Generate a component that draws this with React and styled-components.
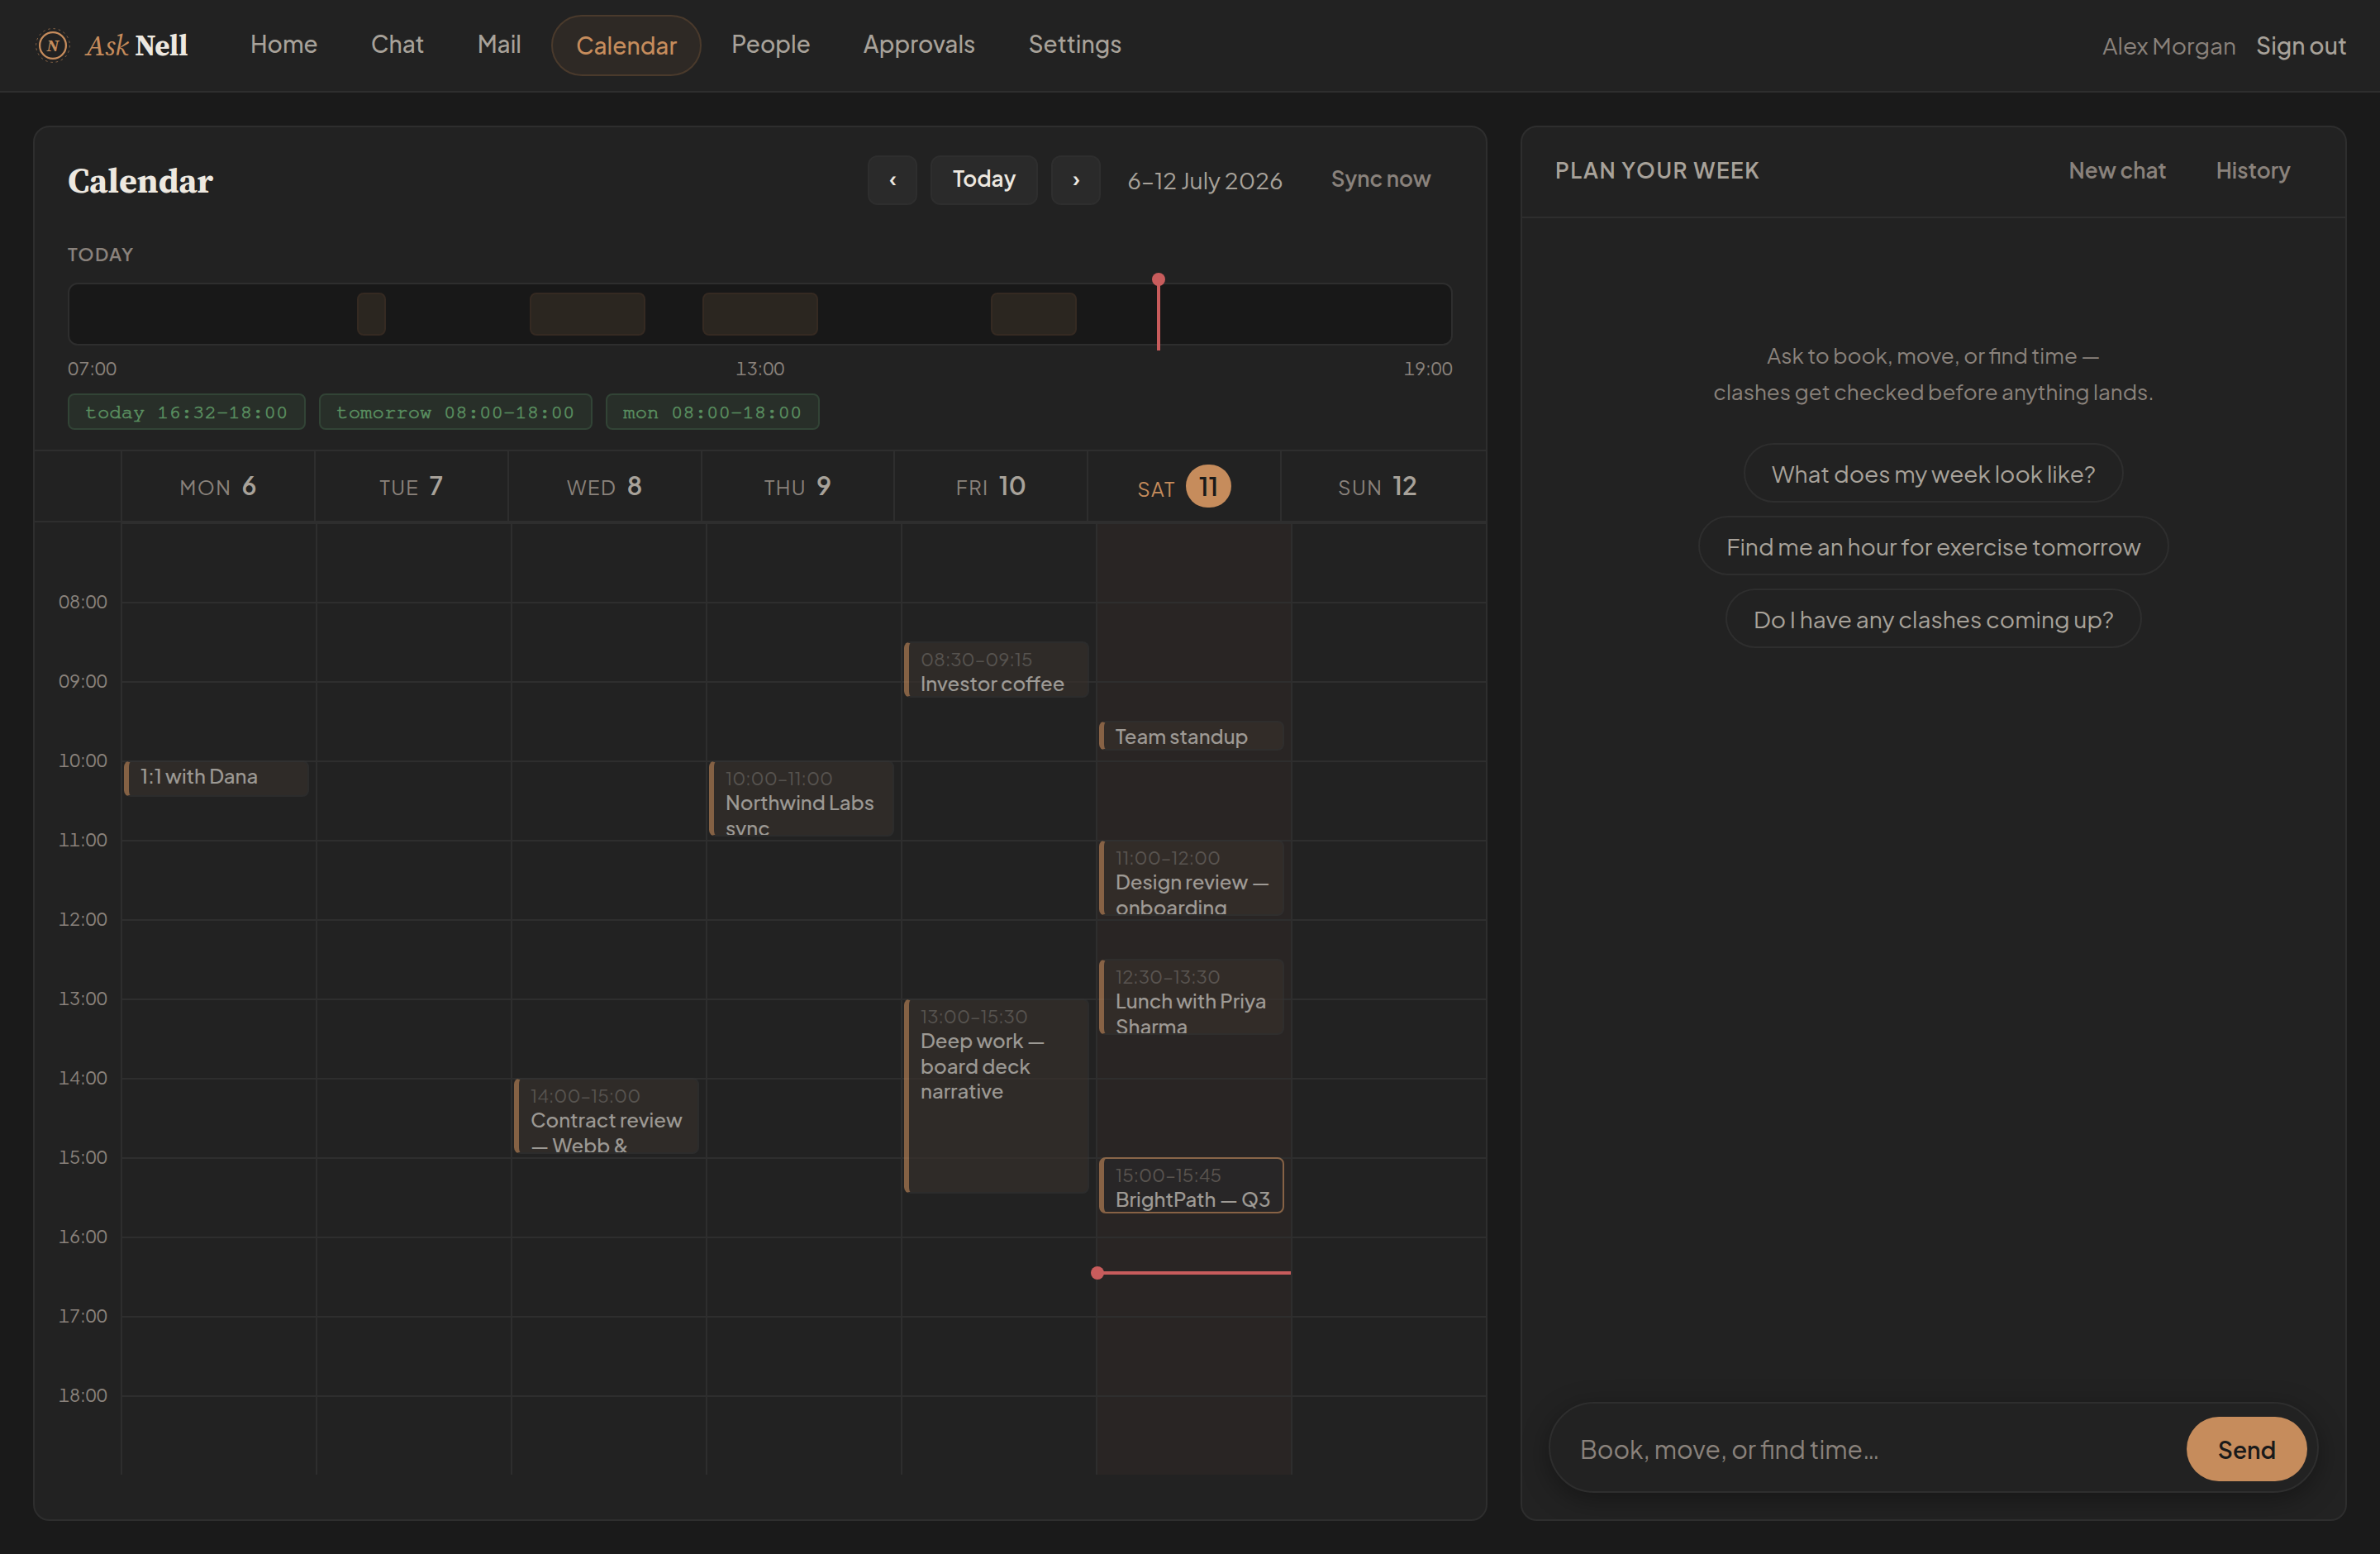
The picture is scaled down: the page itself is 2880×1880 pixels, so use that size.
import styled, { createGlobalStyle, css } from "styled-components"

const sans = `"Plus Jakarta Sans", Inter, "Open Sans", sans-serif`
const serif = `"Source Serif 4", "Liberation Serif", serif`

const GlobalStyle = createGlobalStyle`
    * {
        box-sizing: border-box;
    }
    body {
        margin: 0;
        background: #1a1a1a;
        color: #ede8e0;
        font-family: ${sans};
        -webkit-font-smoothing: antialiased;
    }
    button, input {
        font-family: inherit;
    }
`

const Page = styled.div`
    display: flex;
    flex-direction: column;
    width: 2880px;
    height: 1880px;
    overflow: hidden;
`

/* top bar */

const Topbar = styled.header`
    display: flex;
    align-items: flex-start;
    height: 112px;
    padding: 18px 40px 0;
    background: #222222;
    border-bottom: 2px solid #2e2e2e;
`

const Brand = styled.a`
    display: flex;
    align-items: center;
    gap: 16px;
    width: 235px;
    height: 74px;
    font: 700 35px/44px ${serif};
    white-space: nowrap;
    em {
        color: #c68c5c;
        font-weight: 400;
    }
`

const Nav = styled.nav`
    display: flex;
    align-items: flex-start;
    gap: 8px;
    flex: 1;
`

const NavLink = styled.a`
    padding: 0 28px;
    border-radius: 37px;
    font-size: 28px;
    font-weight: 500;
    line-height: 70px;
    color: #a8a29a;
    ${p => p.$active && css`
        color: #c68c5c;
        background: #2e2925;
        border: 2px solid #4a3a2c;
    `}
`

const Account = styled.div`
    display: flex;
    gap: 24px;
    font-size: 28px;
    line-height: 74px;
    color: #8a827c;
    b {
        font-weight: 500;
        color: #a8a29a;
    }
`

/* cards */

const Main = styled.main`
    flex: 1;
    display: grid;
    grid-template-columns: 1760px 1fr;
    gap: 40px;
    padding: 40px;
    min-height: 0;
`

const Card = styled.section`
    display: flex;
    flex-direction: column;
    min-height: 0;
    overflow: hidden;
    background: #222222;
    border: 2px solid #2e2e2e;
    border-radius: 20px;
`

const CalendarHead = styled.div`
    display: flex;
    align-items: center;
    gap: 16px;
    height: 94px;
    padding: 34px 40px 0;
`

const Title = styled.h1`
    flex: 1;
    margin: 0;
    font: 700 42px/60px ${serif};
`

const Button = styled.button`
    width: ${p => p.$wide ? "130px" : "60px"};
    height: 60px;
    padding: 0 0 5px;
    border: 2px solid #2e2e2e;
    border-radius: 12px;
    background: #2a2a2a;
    color: #ede8e0;
    font-size: 26px;
    font-weight: 600;
`

const GhostButton = styled.button`
    height: 60px;
    padding: 0 26px 5px;
    border: 0;
    background: transparent;
    color: #8a827c;
    font-size: 26px;
    font-weight: 600;
`

const Range = styled.span`
    margin: 0 16px;
    font-size: 28px;
    line-height: 60px;
    color: #a8a29a;
`

/* today strip */

const Today = styled.div`
    padding: 45px 40px 24px;
`

const TodayLabel = styled.div`
    margin-bottom: 21px;
    font-size: 22px;
    font-weight: 600;
    line-height: 28px;
    letter-spacing: 0.06em;
    color: #8a827c;
`

const Strip = styled.div`
    position: relative;
    height: 76px;
    background: #181818;
    border: 2px solid #2e2e2e;
    border-radius: 12px;
`

const Busy = styled.i`
    position: absolute;
    top: 10px;
    bottom: 10px;
    border: 2px solid #352a22;
    border-radius: 8px;
    background: #2b2620;
`

const StripNow = styled.i`
    position: absolute;
    top: -8px;
    bottom: -8px;
    width: 4px;
    margin-left: -1px;
    background: #c85c5c;
    &::before {
        content: "";
        position: absolute;
        top: -6px;
        left: -6px;
        width: 16px;
        height: 16px;
        border-radius: 50%;
        background: #c85c5c;
    }
`

const StripScale = styled.div`
    display: flex;
    justify-content: space-between;
    margin: 13px 0 17px;
    font-size: 22px;
    line-height: 28px;
    font-variant-numeric: tabular-nums;
    color: #8a827c;
`

const FreeList = styled.div`
    display: flex;
    gap: 16px;
`

const Free = styled.span`
    height: 44px;
    padding: 1px 19.5px 0;
    border: 2px solid #324436;
    border-radius: 8px;
    background: #282f29;
    color: #5a8f60;
    font: 24px/40px FreeMono, "Liberation Mono", monospace;
    -webkit-text-stroke: 0.7px #5a8f60;
`

/* week grid */

const WeekHead = styled.div`
    display: grid;
    grid-template-columns: 104px repeat(7, 1fr);
    height: 88px;
    padding-right: 15px;
    border-top: 2px solid #2e2e2e;
    border-bottom: 2px solid #2e2e2e;
`

const DayHead = styled.div`
    display: flex;
    align-items: center;
    justify-content: center;
    gap: 12px;
    border-left: 2px solid #2e2e2e;
    font-size: 24px;
    letter-spacing: 0.06em;
    color: ${p => p.$today ? "#c68c5c" : "#8a827c"};
    b {
        font-size: 30px;
        font-weight: 600;
        letter-spacing: 0;
        color: #a8a29a;
    }
    ${p => p.$today ? css`
        span {
            padding-top: 5px;
        }
        b {
            padding: 0 16px;
            border-radius: 26px;
            line-height: 52px;
            background: #c68c5c;
            color: #1a1a1a;
        }
    ` : css`
        align-items: baseline;
        line-height: 82px;
    `}
`

const WeekBody = styled.div`
    display: grid;
    grid-template-columns: 104px repeat(7, 236px);
    height: 1152px;
`

const Gutter = styled.div`
    padding: 47px 16px 0 0;
    font-size: 22px;
    line-height: 96px;
    font-variant-numeric: tabular-nums;
    text-align: right;
    color: #8a827c;
`

const DayColumn = styled.div`
    position: relative;
    border-left: 2px solid #2e2e2e;
    background: ${p => p.$today ? "#292524" : "transparent"};
`

const Hour = styled.div`
    height: 96px;
    border-top: 2px solid #2e2e2e;
`

const EventBox = styled.div`
    position: absolute;
    left: 2px;
    right: 8px;
    overflow: hidden;
    padding: ${p => p.$compact ? "1px" : "5px"} 12px 0 14px;
    border: 2px solid ${p => p.$pending ? "#c68c5c" : "#343434"};
    border-left: 6px solid #c68c5c;
    border-radius: 8px;
    background: ${p => p.$pending ? "#282829" : "#39312c"};
    opacity: 0.6;
    font-size: 24px;
    font-weight: 500;
    line-height: 30.5px;
    time {
        display: block;
        font-size: 22px;
        font-weight: 400;
        line-height: 28px;
        color: #7a746e;
    }
`

const NowLine = styled.i`
    position: absolute;
    left: 0;
    right: 0;
    height: 4px;
    background: #c85c5c;
    &::before {
        content: "";
        position: absolute;
        top: -6px;
        left: -8px;
        width: 16px;
        height: 16px;
        border-radius: 50%;
        background: #c85c5c;
    }
`

/* chat panel */

const PanelHead = styled.div`
    display: flex;
    align-items: center;
    gap: 8px;
    height: 110px;
    padding: 0 40px;
    border-bottom: 2px solid #2e2e2e;
`

const PanelTitle = styled.h2`
    flex: 1;
    margin: 0;
    padding-bottom: 5px;
    font-size: 26px;
    font-weight: 600;
    letter-spacing: 0.06em;
    color: #a8a29a;
`

const PanelBody = styled.div`
    flex: 1;
    display: flex;
    flex-direction: column;
    align-items: center;
    gap: 16px;
    padding-top: 144px;
`

const Intro = styled.p`
    margin: 0 0 24px;
    font-size: 26px;
    line-height: 44px;
    text-align: center;
    color: #8a827c;
`

const Suggestion = styled.button`
    height: 72px;
    padding: 0 32px;
    border: 2px solid #2e2e2e;
    border-radius: 36px;
    background: transparent;
    color: #a8a29a;
    font-size: 28px;
`

const Composer = styled.div`
    display: flex;
    align-items: center;
    height: 110px;
    margin: 0 32px 32px;
    padding: 0 12px 0 36px;
    border: 2px solid #2e2e2e;
    border-radius: 55px;
    background: #222222;
    box-shadow: 0 8px 32px rgba(0, 0, 0, 0.35);
`

const Field = styled.input`
    flex: 1;
    padding: 3px 0 0;
    border: 0;
    outline: 0;
    background: transparent;
    font-size: 30px;
    &::placeholder {
        color: #8a827c;
    }
`

const Send = styled.button`
    width: 146px;
    height: 78px;
    margin-top: 4px;
    border: 0;
    border-radius: 39px;
    background: #c68c5c;
    color: #1a1a1a;
    font-size: 28px;
    font-weight: 600;
`

const links = ["Home", "Chat", "Mail", "Calendar", "People", "Approvals", "Settings"]
const suggestions = ["What does my week look like?", "Find me an hour for exercise tomorrow", "Do I have any clashes coming up?"]
const free = ["today 16:32–18:00", "tomorrow 08:00–18:00", "mon 08:00–18:00"]
const hours = ["08:00", "09:00", "10:00", "11:00", "12:00", "13:00", "14:00", "15:00", "16:00", "17:00", "18:00"]

const dayStart = 7
const dayHours = 12
const hourHeight = 96
const now = 16.45

const week = [
    { name: "MON", date: 6, events: [{ start: 10, end: 10.5, title: "1:1 with Dana" }] },
    { name: "TUE", date: 7, events: [] },
    { name: "WED", date: 8, events: [{ start: 14, end: 15, time: "14:00–15:00", title: "Contract review — Webb &" }] },
    { name: "THU", date: 9, events: [{ start: 10, end: 11, time: "10:00–11:00", title: "Northwind Labs sync" }] },
    {
        name: "FRI", date: 10, events: [
            { start: 8.5, end: 9.25, time: "08:30–09:15", title: "Investor coffee" },
            { start: 13, end: 15.5, time: "13:00–15:30", title: "Deep work — board deck narrative" },
        ],
    },
    {
        name: "SAT", date: 11, today: true, events: [
            { start: 9.5, end: 9.75, title: "Team standup" },
            { start: 11, end: 12, time: "11:00–12:00", title: "Design review — onboarding" },
            { start: 12.5, end: 13.5, time: "12:30–13:30", title: "Lunch with Priya Sharma" },
            { start: 15, end: 15.75, time: "15:00–15:45", title: "BrightPath — Q3", pending: true },
        ],
    },
    { name: "SUN", date: 12, events: [] },
]

const percent = span => `${span / dayHours * 100}%`

const Logo = () => (
    <svg width="48" height="48" viewBox="0 0 48 48" fill="none">
        <circle cx="24" cy="24" r="20.4" stroke="#c68c5c" strokeOpacity="0.6" strokeWidth="1" strokeDasharray="2.6 3.8" />
        <circle cx="24" cy="24" r="15.9" stroke="#c68c5c" strokeWidth="2.3" />
        <text x="24" y="31" textAnchor="middle" fontFamily="'Source Serif 4', 'Liberation Serif', serif" fontStyle="italic" fontWeight="700" fontSize="20" fill="#c68c5c">N</text>
    </svg>
)

const Event = ({ event }) => {
    const { start, end, time, title, pending } = event
    const height = Math.max((end - start) * hourHeight - 4, 36)
    return <EventBox $compact={!time} $pending={pending} style={{ top: (start - dayStart) * hourHeight, height }}>
        {time && <time>{time}</time>}
        {title}
    </EventBox>
}

const TodayStrip = ({ events }) => (
    <Today>
        <TodayLabel>TODAY</TodayLabel>
        <Strip>
            {events.map(e => (
                <Busy key={e.start} style={{ left: percent(e.start - dayStart), width: percent(e.end - e.start) }} />
            ))}
            <StripNow style={{ left: percent(now - dayStart) }} />
        </Strip>
        <StripScale>
            <span>07:00</span>
            <span>13:00</span>
            <span>19:00</span>
        </StripScale>
        <FreeList>
            {free.map(slot => <Free key={slot}>{slot}</Free>)}
        </FreeList>
    </Today>
)

const Week = () => <>
    <WeekHead>
        <div />
        {week.map(day => (
            <DayHead key={day.name} $today={day.today}>
                <span>{day.name}</span>
                <b>{day.date}</b>
            </DayHead>
        ))}
    </WeekHead>
    <WeekBody>
        <Gutter>
            {hours.map(hour => <div key={hour}>{hour}</div>)}
        </Gutter>
        {week.map(day => (
            <DayColumn key={day.name} $today={day.today}>
                {Array.from({ length: dayHours }, (_, i) => <Hour key={i} />)}
                {day.events.map(event => <Event key={event.start} event={event} />)}
                {day.today && <NowLine style={{ top: Math.floor((now - dayStart) * hourHeight) - 1 }} />}
            </DayColumn>
        ))}
    </WeekBody>
</>

export default function App() {
    return <>
        <GlobalStyle />
        <Page>
            <Topbar>
                <Brand>
                    <Logo />
                    <span><em>Ask</em> Nell</span>
                </Brand>
                <Nav>
                    {links.map(link => <NavLink key={link} $active={link === "Calendar"}>{link}</NavLink>)}
                </Nav>
                <Account>
                    <span>Alex Morgan</span>
                    <b>Sign out</b>
                </Account>
            </Topbar>
            <Main>
                <Card>
                    <CalendarHead>
                        <Title>Calendar</Title>
                        <Button>‹</Button>
                        <Button $wide>Today</Button>
                        <Button>›</Button>
                        <Range>6–12 July 2026</Range>
                        <GhostButton>Sync now</GhostButton>
                    </CalendarHead>
                    <TodayStrip events={week.find(day => day.today).events} />
                    <Week />
                </Card>
                <Card>
                    <PanelHead>
                        <PanelTitle>PLAN YOUR WEEK</PanelTitle>
                        <GhostButton>New chat</GhostButton>
                        <GhostButton>History</GhostButton>
                    </PanelHead>
                    <PanelBody>
                        <Intro>
                            Ask to book, move, or find time —<br />
                            clashes get checked before anything lands.
                        </Intro>
                        {suggestions.map(text => <Suggestion key={text}>{text}</Suggestion>)}
                    </PanelBody>
                    <Composer>
                        <Field placeholder="Book, move, or find time…" />
                        <Send>Send</Send>
                    </Composer>
                </Card>
            </Main>
        </Page>
    </>
}
